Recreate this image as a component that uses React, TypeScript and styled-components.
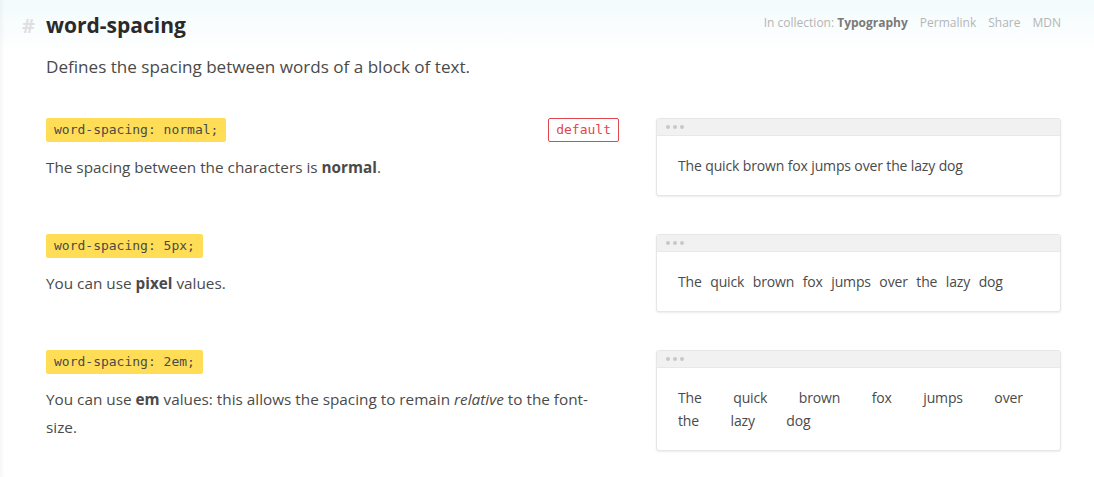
import React from "react";
import styled, { createGlobalStyle } from "styled-components";

const Global = createGlobalStyle`
  html, body { margin: 0; padding: 0; background: #fff; }
  body { font-family: "Open Sans", "Noto Sans", sans-serif; color: #4a4a4a; }
  * { box-sizing: border-box; }
`;

const Page = styled.div`
  width: 1094px;
  min-height: 477px;
  background: linear-gradient(180deg, #f3fbfc 0px, #ffffff 55px);
  box-shadow: inset 6px 0 6px -6px rgba(0, 0, 0, 0.08);
  padding: 10px 33px 0 22px;
`;

const Header = styled.header`
  display: flex;
  align-items: center;
  height: 30px;
`;

const Hash = styled.span`
  width: 24px;
  font-size: 20px;
  font-weight: 700;
  color: #e0e0e0;
`;

const Title = styled.h1`
  margin: 0;
  font-size: 21px;
  font-weight: 700;
  color: #2a2a2a;
  flex: 1;
`;

const Meta = styled.nav`
  align-self: flex-start;
  padding-top: 4px;
  display: flex;
  gap: 12px;
  font-size: 12px;
  line-height: 17px;
  color: #b5b5b5;
`;

const MetaStrong = styled.strong`
  color: #7a7a7a;
`;

const Content = styled.div`
  padding-left: 24px;
`;

const Description = styled.p`
  margin: 14px 0 38px;
  font-size: 17.1px;
  line-height: 26px;
  color: #4a4a4a;
`;

const Row = styled.section`
  display: grid;
  grid-template-columns: 573px 405px;
  column-gap: 37px;
  margin-bottom: 38px;
  align-items: start;
`;

const Left = styled.div``;

const CodeLine = styled.div`
  display: flex;
  justify-content: space-between;
  align-items: center;
`;

const Code = styled.code`
  display: inline-block;
  background: #ffdd57;
  color: #4a4a4a;
  border-radius: 2px;
  font-family: "DejaVu Sans Mono", "Liberation Mono", monospace;
  font-size: 13px;
  line-height: 24px;
  padding: 0 8px;
`;

const Badge = styled.span`
  border: 1px solid #e0474c;
  color: #e0474c;
  border-radius: 2px;
  font-family: "DejaVu Sans Mono", "Liberation Mono", monospace;
  font-size: 13px;
  line-height: 22px;
  padding: 0 7px;
`;

const Text = styled.p`
  margin: 11px 0 0;
  font-size: 15.3px;
  line-height: 28px;
  color: #4a4a4a;
  padding-right: 20px;
`;

const Box = styled.div`
  border: 1px solid #e6e6e6;
  border-radius: 3px;
  box-shadow: 0 1px 2px rgba(0, 0, 0, 0.08);
  background: #fff;
  overflow: hidden;
`;

const BoxHead = styled.div`
  height: 17px;
  background: #f1f1f1;
  border-bottom: 1px solid #e8e8e8;
  display: flex;
  align-items: center;
  gap: 3px;
  padding-left: 9px;
`;

const Dot = styled.span`
  width: 4px;
  height: 4px;
  border-radius: 50%;
  background: #c8c8c8;
`;

const BoxBody = styled.div<{ $spacing: string }>`
  padding: 18px 21px;
  font-size: 14px;
  letter-spacing: -0.14px;
  line-height: 23px;
  color: #4a4a4a;
  word-spacing: ${(p) => p.$spacing};
`;

const SAMPLE = "The quick brown fox jumps over the lazy dog";

const examples = [
  {
    code: "word-spacing: normal;",
    spacing: "normal",
    isDefault: true,
    text: (
      <>
        The spacing between the characters is <strong>normal</strong>.
      </>
    ),
  },
  {
    code: "word-spacing: 5px;",
    spacing: "5px",
    isDefault: false,
    text: (
      <>
        You can use <strong>pixel</strong> values.
      </>
    ),
  },
  {
    code: "word-spacing: 2em;",
    spacing: "2em",
    isDefault: false,
    text: (
      <>
        You can use <strong>em</strong> values: this allows the spacing to remain <em>relative</em> to the
        font-size.
      </>
    ),
  },
];

export default function App() {
  return (
    <>
      <Global />
      <Page>
        <Header>
          <Hash>#</Hash>
          <Title>word-spacing</Title>
          <Meta>
            <span>
              In collection: <MetaStrong>Typography</MetaStrong>
            </span>
            <span>Permalink</span>
            <span>Share</span>
            <span>MDN</span>
          </Meta>
        </Header>
        <Content>
          <Description>Defines the spacing between words of a block of text.</Description>
          {examples.map((ex) => (
            <Row key={ex.code}>
              <Left>
                <CodeLine>
                  <Code>{ex.code}</Code>
                  {ex.isDefault && <Badge>default</Badge>}
                </CodeLine>
                <Text>{ex.text}</Text>
              </Left>
              <Box>
                <BoxHead>
                  <Dot />
                  <Dot />
                  <Dot />
                </BoxHead>
                <BoxBody $spacing={ex.spacing}>{SAMPLE}</BoxBody>
              </Box>
            </Row>
          ))}
        </Content>
      </Page>
    </>
  );
}
